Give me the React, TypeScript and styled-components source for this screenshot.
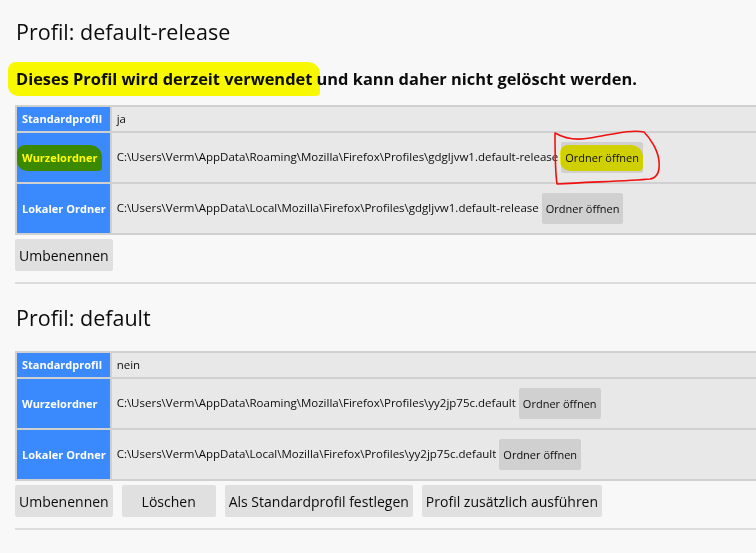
import React from "react";
import styled, { createGlobalStyle } from "styled-components";

const GlobalStyle = createGlobalStyle`
  html, body {
    margin: 0;
    padding: 0;
    background: #f8f8f8;
    overflow: hidden;
  }
  body {
    font-family: "Open Sans", "Noto Sans", sans-serif;
    color: #0c0c0d;
  }
`;

const Page = styled.div`
  position: relative;
  display: flow-root;
  width: 800px;
  padding: 0 0 0 15px;
  box-sizing: border-box;
`;

const Section = styled.section`
  border-bottom: 2px solid #dcdcdc;
  padding-bottom: 11px;
`;

const Title = styled.h2<{ $top: number }>`
  font-size: 21.5px;
  font-weight: 400;
  line-height: 28px;
  margin: ${(p) => p.$top}px 0 0 1px;
`;

const Warning = styled.p`
  font-size: 16.4px;
  font-weight: 700;
  line-height: 24px;
  margin: 21px 0 0 1px;
`;

const Table = styled.table<{ $top: number }>`
  margin-top: ${(p) => p.$top}px;
  width: 760px;
  border-spacing: 2px;
  background: #d0d0d0;
  font-size: 11.5px;
  line-height: 16px;
`;

const Head = styled.th`
  background: #3a89fd;
  color: #fff;
  font-size: 11px;
  font-weight: 700;
  text-align: left;
  white-space: nowrap;
  padding: 4px 4px 4px 5px;
  width: 1px;
`;

const Cell = styled.td<{ $tall?: boolean }>`
  background: #e8e8e8;
  padding: ${(p) => (p.$tall ? "9px" : "4px")} 5px;
  white-space: nowrap;
  vertical-align: middle;
`;

const Path = styled.span`
  margin-right: 3px;
`;

const SmallButton = styled.button`
  font: inherit;
  font-size: 11px;
  color: #0c0c0d;
  background: #d0d0d0;
  border: none;
  border-radius: 2px;
  height: 31px;
  padding: 0 4px;
  vertical-align: middle;
`;

const Actions = styled.div`
  display: flex;
  gap: 9px;
  margin-top: 4px;
`;

const Button = styled.button`
  font: inherit;
  font-size: 14px;
  color: #0c0c0d;
  background: #e0e0e0;
  border: none;
  border-radius: 2px;
  height: 32px;
  min-width: 94px;
  padding: 0 4px;
`;

const Marker = styled.span<{ $wide?: boolean }>`
  position: relative;
  &::after {
    content: "";
    position: absolute;
    left: ${(p) => (p.$wide ? "-8px" : "-5px")};
    right: ${(p) => (p.$wide ? "-8px" : "-4px")};
    top: -5px;
    bottom: -6px;
    background: #ffff00;
    mix-blend-mode: multiply;
    border-radius: 8px 12px 4px 10px;
    pointer-events: none;
  }
`;

const Scribble = styled.svg`
  position: absolute;
  left: 540px;
  top: 120px;
  overflow: visible;
  pointer-events: none;
`;

type Row = { label: string; value: string; folder?: boolean; mark?: boolean };

const ProfileTable: React.FC<{ rows: Row[]; top: number; markButton?: boolean }> = ({
  rows,
  top,
  markButton,
}) => (
  <Table $top={top}>
    <tbody>
      {rows.map((r) => (
        <tr key={r.label}>
          <Head>{r.mark ? <Marker>{r.label}</Marker> : r.label}</Head>
          <Cell $tall={r.folder}>
            <Path>{r.value}</Path>
            {r.folder &&
              (markButton && r.mark ? (
                <SmallButton>
                  <Marker>Ordner öffnen</Marker>
                </SmallButton>
              ) : (
                <SmallButton>Ordner öffnen</SmallButton>
              ))}
          </Cell>
        </tr>
      ))}
    </tbody>
  </Table>
);

export default function App() {
  return (
    <Page>
      <GlobalStyle />
      <Section>
        <Title $top={18}>Profil: default-release</Title>
        <Warning>
          <Marker $wide>Dieses Profil wird derzeit verwendet</Marker> und kann daher nicht gelöscht werden.
        </Warning>
        <ProfileTable
          top={14}
          markButton
          rows={[
            { label: "Standardprofil", value: "ja" },
            {
              label: "Wurzelordner",
              value: "C:\\Users\\Verm\\AppData\\Roaming\\Mozilla\\Firefox\\Profiles\\gdgljvw1.default-release",
              folder: true,
              mark: true,
            },
            {
              label: "Lokaler Ordner",
              value: "C:\\Users\\Verm\\AppData\\Local\\Mozilla\\Firefox\\Profiles\\gdgljvw1.default-release",
              folder: true,
            },
          ]}
        />
        <Actions>
          <Button>Umbenennen</Button>
        </Actions>
      </Section>
      <Section>
        <Title $top={20}>Profil: default</Title>
        <ProfileTable
          top={19}
          rows={[
            { label: "Standardprofil", value: "nein" },
            {
              label: "Wurzelordner",
              value: "C:\\Users\\Verm\\AppData\\Roaming\\Mozilla\\Firefox\\Profiles\\yy2jp75c.default",
              folder: true,
            },
            {
              label: "Lokaler Ordner",
              value: "C:\\Users\\Verm\\AppData\\Local\\Mozilla\\Firefox\\Profiles\\yy2jp75c.default",
              folder: true,
            },
          ]}
        />
        <Actions>
          <Button>Umbenennen</Button>
          <Button>Löschen</Button>
          <Button>Als Standardprofil festlegen</Button>
          <Button>Profil zusätzlich ausführen</Button>
        </Actions>
      </Section>
      <Scribble width="140" height="75">
        <path
          d="M15 13 C22 17 34 21 50 18 C70 15 90 9 104 12 C110 18 118 30 119 41 C120 52 117 58 110 59 C90 61 50 62 17 64 C15 50 15 30 15 13"
          fill="none"
          stroke="#f01010"
          strokeWidth="1.6"
          strokeLinejoin="round"
          strokeLinecap="round"
        />
      </Scribble>
    </Page>
  );
}
